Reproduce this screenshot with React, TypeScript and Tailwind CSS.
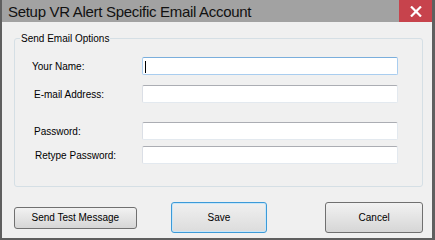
import React from 'react';

const Field = ({ label, labelPad, focused }: { label: string; labelPad: string; focused?: boolean }) => (
  <div className="flex items-center h-[18px]">
    <span className={`w-[110px] ${labelPad}`}>{label}</span>
    <div
      className={`relative w-[256px] h-[18px] bg-white border rounded-[2px] ${
        focused
          ? 'border-[#a9cdef] border-t-[#7aaedc]'
          : 'border-[#e3e9ef] border-t-[#abadb3] border-l-[#dbdfe6]'
      }`}
    >
      {focused && <span className="absolute left-[2px] top-[3px] w-[1px] h-[12px] bg-black" />}
    </div>
  </div>
);

const App = () => {
  return (
    <div
      className="w-[435px] h-[240px] flex flex-col bg-[#f0f0f0] border-l-2 border-r-[3px] border-b-2 border-[#5f5f5f] text-[10px] text-black"
      style={{ fontFamily: '"Liberation Sans", Arial, sans-serif' }}
    >
      <div className="h-[22px] flex items-center justify-between bg-[#a2a2a2] shrink-0">
        <span className="pl-[6px] text-[15px] tracking-[-0.3px] leading-none text-[#111]">Setup VR Alert Specific Email Account</span>
        <div className="w-[33px] h-[22px] bg-[#c7434c] flex items-center justify-center">
          <svg width="12" height="11" viewBox="0 0 12 11">
            <path d="M1 0.5 L11 10.5 M11 0.5 L1 10.5" stroke="white" strokeWidth="2.2" />
          </svg>
        </div>
      </div>

      <div className="flex flex-col pl-[12px] pr-[9px]">
        <fieldset className="mt-[10px] h-[155px] border border-[#d5dfe5] rounded-[3px]">
          <legend className="ml-[5px] px-[1px] leading-[13px]">Send Email Options</legend>
          <div className="flex flex-col pt-[12px] pl-[17px]">
            <Field label="Your Name:" labelPad="pl-0" focused />
            <div className="h-[10px]" />
            <Field label="E-mail Address:" labelPad="pl-[2px]" />
            <div className="h-[19px]" />
            <Field label="Password:" labelPad="pl-[2px]" />
            <div className="h-[6px]" />
            <Field label="Retype Password:" labelPad="pl-[3px]" />
          </div>
        </fieldset>

        <div className="flex items-center mt-[15px]">
          <button className="w-[123px] h-[22px] rounded-[3px] border border-[#707070] bg-gradient-to-b from-[#f2f2f2] to-[#d6d6d6]">
            Send Test Message
          </button>
          <button className="ml-[34px] w-[97px] h-[31px] rounded-[3px] border border-[#3c9ad8] shadow-[inset_0_0_0_1px_#c8e6f8] bg-gradient-to-b from-[#f0f0f0] to-[#dcdcdc]">
            Save
          </button>
          <button className="ml-[58px] w-[98px] h-[31px] rounded-[3px] border border-[#707070] bg-gradient-to-b from-[#f2f2f2] to-[#d6d6d6]">
            Cancel
          </button>
        </div>
      </div>
    </div>
  );
};

export default App;
